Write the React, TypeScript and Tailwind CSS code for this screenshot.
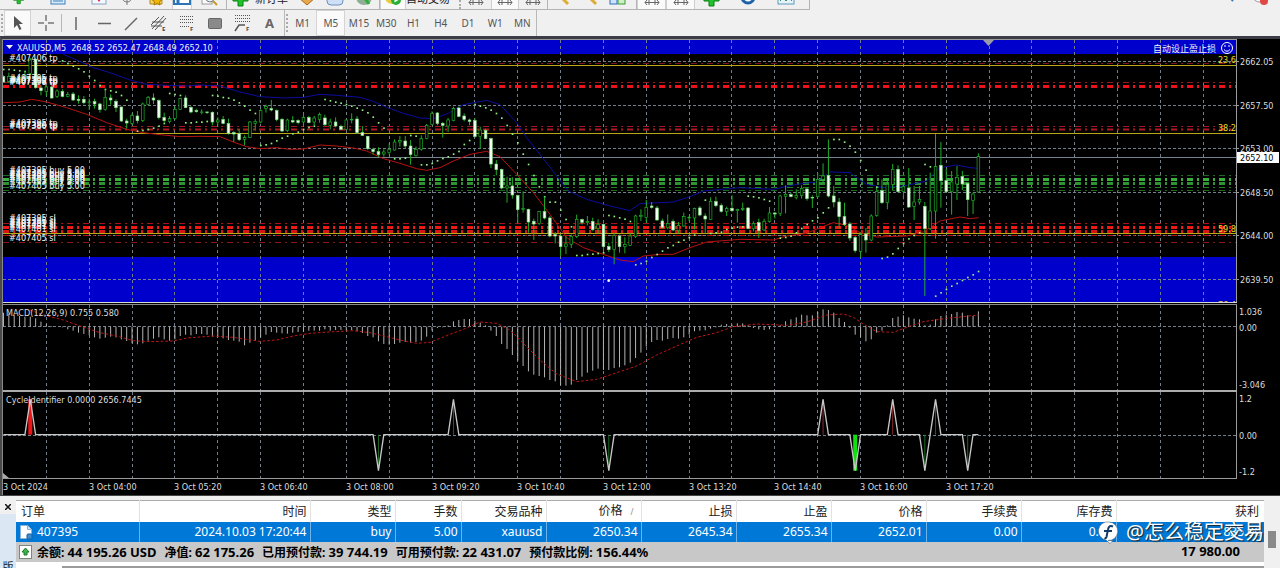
/**
 * MT4 行情终端 — 工具栏 + XAUUSD M5 图表 + 订单面板
 *
 * 图表坐标：1px = 3 tick，每根 K 线间隔 16.07 tick。
 */

import type { ReactNode } from 'react';

const UI_FONT = "font-['Noto_Sans','Noto_Sans_CJK_SC',sans-serif]";
const PANE_FONT = "text-[9px] font-['DejaVu_Sans_Condensed','Noto_Sans','Noto_Sans_CJK_SC',sans-serif]";

const GRID = '#737e8a';
const BAR_STEP = 16.07;
const barX = (i: number) => 10.5 + BAR_STEP * i;

// 最高、实体上沿、实体下沿、最低、是否阳线
type Candle = [number, number, number, number, 0 | 1];

const CANDLES: Candle[] = [
  [118, 122, 138, 140, 0], [110, 122, 136, 140, 1], [118, 124, 138, 142, 0], [112, 124, 136, 142, 1],
  [105, 118, 130, 138, 1], [66, 72, 112, 118, 1], [66, 70, 155, 158, 0], [148, 156, 164, 178, 0],
  [148, 153, 166, 180, 1], [150, 153, 186, 188, 0], [160, 165, 181, 186, 1], [160, 166, 181, 184, 0],
  [168, 176, 182, 184, 1], [168, 174, 192, 195, 0], [178, 190, 193, 203, 0], [180, 190, 200, 205, 0],
  [188, 198, 200, 222, 1], [188, 197, 204, 218, 0], [200, 204, 221, 230, 0], [160, 184, 221, 224, 1],
  [175, 186, 192, 206, 0], [190, 196, 215, 228, 0], [212, 213, 255, 258, 0], [248, 255, 261, 278, 0],
  [232, 239, 262, 268, 1], [225, 240, 254, 262, 0], [200, 204, 254, 258, 1], [180, 184, 206, 208, 1],
  [172, 186, 192, 204, 0], [190, 194, 245, 250, 0], [230, 245, 254, 260, 0], [240, 248, 257, 262, 1],
  [212, 220, 248, 252, 1], [186, 188, 220, 222, 1], [178, 186, 215, 216, 0], [210, 214, 228, 232, 0],
  [218, 224, 227, 230, 0], [220, 228, 230, 235, 1], [226, 228, 230, 234, 0], [226, 229, 258, 268, 0],
  [244, 252, 258, 272, 1], [240, 251, 262, 265, 0], [248, 263, 292, 296, 0], [286, 290, 294, 318, 0],
  [278, 293, 311, 315, 0], [298, 305, 310, 328, 1], [255, 258, 304, 306, 1], [250, 256, 262, 284, 1],
  [220, 224, 258, 262, 1], [206, 212, 218, 230, 1], [192, 218, 222, 226, 0], [220, 224, 251, 256, 0],
  [246, 250, 285, 288, 0], [248, 252, 284, 288, 1], [240, 254, 258, 262, 0], [250, 254, 260, 265, 0],
  [232, 245, 258, 270, 1], [240, 245, 260, 262, 0], [240, 246, 258, 268, 1], [230, 236, 250, 260, 1],
  [236, 246, 266, 270, 0], [248, 258, 268, 280, 1], [244, 258, 270, 274, 0], [266, 271, 280, 282, 0],
  [250, 252, 280, 282, 1], [232, 250, 252, 262, 1], [240, 249, 290, 294, 0], [270, 290, 298, 300, 0],
  [300, 301, 338, 342, 0], [335, 340, 347, 356, 0], [334, 347, 356, 362, 0], [340, 348, 354, 362, 1],
  [322, 340, 350, 356, 1], [310, 318, 342, 344, 1], [300, 314, 318, 332, 1], [300, 315, 330, 338, 0],
  [312, 330, 356, 386, 0], [332, 340, 358, 362, 1], [298, 308, 340, 344, 1], [264, 268, 308, 310, 1],
  [226, 232, 266, 268, 1], [228, 231, 262, 268, 0], [258, 262, 268, 305, 0], [246, 252, 270, 288, 1],
  [212, 218, 254, 256, 1], [212, 216, 241, 244, 0], [232, 240, 250, 256, 0], [248, 252, 256, 268, 0],
  [246, 254, 302, 305, 0], [272, 282, 302, 338, 1], [278, 283, 308, 310, 0], [305, 308, 384, 396, 0],
  [372, 384, 401, 418, 0], [398, 401, 456, 460, 0], [422, 450, 456, 500, 1], [424, 450, 477, 488, 0],
  [476, 479, 521, 562, 0], [466, 518, 521, 530, 1], [518, 520, 558, 590, 0], [548, 556, 564, 612, 0],
  [525, 527, 562, 566, 1], [482, 527, 546, 550, 0], [540, 546, 600, 604, 0], [588, 596, 600, 622, 0],
  [596, 600, 632, 660, 0], [600, 624, 632, 654, 1], [596, 601, 625, 636, 1], [536, 550, 602, 606, 1],
  [548, 551, 559, 566, 0], [540, 557, 560, 568, 1], [545, 556, 581, 586, 0], [550, 565, 578, 592, 1],
  [562, 565, 632, 644, 0], [620, 632, 641, 648, 0], [592, 598, 641, 685, 1], [596, 600, 632, 650, 0],
  [604, 626, 632, 652, 1], [592, 600, 628, 630, 1], [536, 540, 602, 606, 1], [520, 538, 542, 555, 1],
  [492, 514, 544, 560, 1], [498, 510, 514, 518, 0], [510, 516, 552, 554, 0], [548, 555, 574, 578, 0],
  [535, 563, 575, 580, 1], [550, 556, 582, 586, 0], [558, 568, 583, 592, 1], [530, 542, 570, 572, 1],
  [540, 544, 546, 555, 1], [515, 517, 546, 580, 1], [510, 516, 537, 541, 0], [532, 540, 549, 592, 0],
  [484, 496, 550, 552, 1], [482, 497, 509, 514, 0], [502, 508, 526, 530, 0], [512, 518, 526, 540, 1],
  [478, 517, 524, 528, 0], [518, 520, 524, 560, 1], [500, 517, 520, 525, 1], [514, 516, 578, 580, 0],
  [556, 562, 578, 586, 1], [548, 560, 584, 606, 0], [548, 556, 582, 585, 1], [513, 531, 556, 560, 1],
  [528, 531, 534, 548, 0], [476, 480, 532, 540, 1], [448, 475, 482, 532, 1], [470, 476, 482, 484, 0],
  [460, 478, 484, 490, 1], [448, 458, 478, 488, 1], [455, 459, 488, 494, 0], [478, 484, 486, 516, 0],
  [410, 430, 482, 486, 1], [382, 420, 430, 442, 1], [310, 418, 480, 484, 0], [450, 480, 498, 514, 0],
  [486, 498, 542, 578, 0], [500, 542, 566, 570, 0], [558, 564, 606, 614, 0], [600, 605, 644, 650, 0],
  [590, 596, 646, 666, 1], [576, 594, 612, 650, 0], [535, 540, 612, 616, 1], [455, 466, 538, 542, 1],
  [430, 464, 500, 504, 0], [432, 445, 500, 520, 1], [384, 400, 445, 464, 1], [388, 400, 467, 470, 0],
  [440, 452, 467, 490, 1], [396, 456, 513, 516, 0], [450, 498, 511, 552, 1], [450, 490, 498, 506, 1],
  [498, 511, 578, 780, 0], [410, 525, 578, 582, 1], [294, 392, 525, 608, 1], [318, 388, 434, 515, 0],
  [398, 434, 467, 470, 0], [405, 438, 467, 536, 1], [390, 424, 444, 492, 1], [405, 422, 444, 462, 0],
  [440, 443, 491, 540, 0], [470, 474, 494, 534, 1], [352, 362, 468, 470, 1],
];

// 抛物线转向 (SAR)：起始 K 线 + 逐根数值
const SAR: { from: number; ys: number[] }[] = [
  { from: 0, ys: [100, 100, 102, 104, 106] },
  { from: 11, ys: [74, 82, 90, 98, 107, 120, 133, 148, 160, 164, 168, 178, 192] },
  { from: 25, ys: [285, 283, 280, 276, 270, 262] },
  { from: 31, ys: [172, 175, 178] },
  { from: 34, ys: [260, 260, 258, 258, 256] },
  { from: 39, ys: [178, 180, 184, 186, 192, 200, 210, 222, 232] },
  { from: 48, ys: [328, 326, 322, 314, 306, 300, 293, 288, 280, 274, 270] },
  { from: 60, ys: [190, 194, 198, 201, 205, 210, 216, 222, 230, 243, 260, 276] },
  { from: 73, ys: [368, 368, 366, 298, 300, 386, 386, 382, 374, 367, 362, 354, 346, 325, 313] },
  { from: 88, ys: [205, 210, 215, 222, 232, 246, 268, 294, 320, 354, 385, 418, 452, 482, 498, 498, 522, 550, 572] },
  { from: 107, ys: [658, 658, 655, 654, 652, 650] },
  { from: 113, ys: [538, 541, 545, 549, 556] },
  { from: 118, ys: [686, 682, 675, 664, 655, 645, 635, 628, 618, 612, 604, 597] },
  { from: 131, ys: [492, 592, 590, 588, 580, 576, 573, 572] },
  { from: 139, ys: [480, 482, 485, 490, 495] },
  { from: 145, ys: [606, 604, 600, 590, 577, 565, 554, 545, 530, 515] },
  { from: 155, ys: [310, 310, 318, 330, 348, 373, 402, 430, 453] },
  { from: 164, ys: [667, 663, 653, 637, 622, 608, 598, 590] },
  { from: 172, ys: [385, 392] },
  { from: 174, ys: [780, 770, 760, 750, 742, 733, 724, 716, 706] },
];

const UPPER_BAND =
  '190,55 230,72 280,95 330,110 390,132 440,145 500,148 560,150 600,147 660,150 720,168 780,182 850,186 910,184 960,175 1010,178 1080,184 1120,196 1160,214 1210,232 1260,246 1300,248 1345,232 1390,206 1460,193 1500,206 1550,260 1580,305 1620,355 1670,420 1705,465 1760,490 1830,510 1890,524 1920,503 2020,498 2070,482 2110,465 2220,455 2320,460 2390,445 2450,438 2490,408 2550,410 2570,425 2600,445 2650,455 2710,450 2780,435 2820,395 2870,387 2910,395 2936,397';

const LOWER_BAND =
  '10,200 60,198 95,190 140,198 200,215 260,235 320,260 380,280 430,290 480,296 540,302 600,301 660,302 700,318 740,332 780,338 830,335 870,340 910,339 960,327 1010,330 1060,336 1100,345 1150,368 1200,382 1250,398 1280,403 1320,395 1360,375 1410,355 1460,346 1500,362 1550,415 1600,470 1650,535 1700,605 1750,635 1810,655 1860,672 1900,677 1930,660 1980,655 2020,655 2070,635 2120,618 2220,610 2320,612 2360,600 2420,592 2460,575 2500,560 2540,568 2580,590 2630,603 2720,600 2770,588 2820,555 2880,543 2910,548 2936,545';

const MACD_BARS = [
  38, 42, 46, 48, 50, 50, 55, 65, 72, 78, 80, 82, 88, 92, 98, 102, 106, 112, 116, 113, 110, 112, 118, 123, 130,
  133, 130, 122, 116, 112, 118, 122, 118, 108, 104, 106, 102, 102, 104, 110, 112, 115, 120, 122, 125, 136, 128,
  122, 112, 104, 96, 98, 100, 101, 98, 96, 95, 92, 92, 92, 88, 92, 90, 90, 92, 90, 94, 99, 108, 112, 124, 132,
  134, 132, 128, 126, 128, 126, 122, 110, 92, 84, 82, 76, 64, 60, 57, 57, 62, 68, 76, 92, 108, 132, 147, 165,
  182, 198, 214, 224, 228, 232, 240, 244, 256, 257, 254, 240, 230, 218, 212, 206, 210, 210, 204, 202, 196, 188,
  174, 158, 140, 126, 120, 122, 117, 114, 116, 112, 104, 94, 92, 91, 86, 82, 74, 72, 74, 70, 70, 76, 84, 88, 90,
  88, 82, 76, 64, 58, 52, 44, 46, 46, 36, 28, 30, 38, 54, 66, 84, 104, 112, 124, 118, 98, 92, 76, 54, 50, 46,
  52, 56, 58, 76, 74, 58, 48, 44, 42, 36, 38, 46, 48, 34,
];

const MACD_SIGNAL =
  '90,30 130,45 190,60 240,78 300,98 350,108 400,122 450,125 520,123 560,114 640,108 700,112 780,124 830,120 880,108 930,100 1000,95 1060,92 1110,98 1160,110 1200,120 1250,130 1290,127 1350,103 1390,88 1440,66 1490,70 1530,90 1570,130 1620,180 1670,222 1730,245 1790,238 1850,218 1910,198 1970,165 2030,138 2090,112 2150,98 2200,80 2270,72 2360,76 2420,66 2480,45 2530,42 2560,52 2590,72 2630,95 2680,97 2720,82 2770,65 2840,55 2936,45';

// 周期信号：1 = 顶部，-1 = 底部
const CYCLES: { bar: number; dir: 1 | -1; strong?: boolean }[] = [
  { bar: 5, dir: 1, strong: true },
  { bar: 70, dir: -1 },
  { bar: 84, dir: 1 },
  { bar: 113, dir: -1 },
  { bar: 153, dir: 1 },
  { bar: 159, dir: -1, strong: true },
  { bar: 166, dir: 1 },
  { bar: 172, dir: -1 },
  { bar: 174, dir: 1 },
  { bar: 180, dir: -1 },
];

const PRICES = ['2662.05', '2657.50', '2653.00', '2648.50', '2644.00', '2639.50'];
const PRICE_Y = [22, 66, 109, 153, 196, 240];

const TIMES = [
  '3 Oct 2024', '3 Oct 04:00', '3 Oct 05:20', '3 Oct 06:40', '3 Oct 08:00', '3 Oct 09:20',
  '3 Oct 10:40', '3 Oct 12:00', '3 Oct 13:20', '3 Oct 14:40', '3 Oct 16:00', '3 Oct 17:20',
];

const ORDER_LINES = [
  { y: 23, w: 1, c: '#7a1418' },
  { y: 42, w: 1, c: '#a01820' },
  { y: 46, w: 3, c: '#f0101c' },
  { y: 86, w: 1, c: '#a01820' },
  { y: 89, w: 2, c: '#b01822' },
  { y: 135, w: 1, c: '#1c6a20' },
  { y: 139, w: 3, c: '#3aae3e' },
  { y: 143, w: 3, c: '#2c9430' },
  { y: 147, w: 1, c: '#1f8024' },
  { y: 150, w: 1, c: '#176a1c' },
  { y: 183, w: 1, c: '#a81418' },
  { y: 187, w: 3, c: '#f01818' },
  { y: 191, w: 3, c: '#d81414' },
  { y: 195, w: 1, c: '#b01414' },
  { y: 202, w: 1, c: '#8a1414' },
];

const ORDER_LABELS: { text: string; ys: number[] }[] = [
  { text: '#407406 tp', ys: [21] },
  { text: '#407395 tp', ys: [41, 43] },
  { text: '#407398 tp', ys: [44, 45] },
  { text: '#407395 tp', ys: [86] },
  { text: '#407386 tp', ys: [88, 89] },
  { text: '#407395 buy 5.00', ys: [133, 136, 138] },
  { text: '#407401 buy 5.00', ys: [137, 140, 142] },
  { text: '#407405 buy 5.00', ys: [144, 149] },
  { text: '#407395 sl', ys: [181, 184, 186] },
  { text: '#407401 sl', ys: [187, 189, 192] },
  { text: '#407405 sl', ys: [201] },
];

const TIMEFRAMES = ['M1', 'M5', 'M15', 'M30', 'H1', 'H4', 'D1', 'W1', 'MN'];

const COLUMNS = [
  { title: '订单', value: '407395', width: 'w-[123px]' },
  { title: '时间', value: '2024.10.03 17:20:44', width: 'w-[171px]' },
  { title: '类型', value: 'buy', width: 'w-[85px]' },
  { title: '手数', value: '5.00', width: 'w-[66px]' },
  { title: '交易品种', value: 'xauusd', width: 'w-[85px]' },
  { title: '价格', value: '2650.34', width: 'w-[95px]' },
  { title: '止损', value: '2645.34', width: 'w-[95px]' },
  { title: '止盈', value: '2655.34', width: 'w-[95px]' },
  { title: '价格', value: '2652.01', width: 'w-[95px]' },
  { title: '手续费', value: '0.00', width: 'w-[95px]' },
  { title: '库存费', value: '0.00', width: 'w-[95px]' },
  { title: '获利', value: '835.00', width: 'w-auto' },
];

const SUMMARY = [
  { label: '余额:', value: '44 195.26 USD' },
  { label: '净值:', value: '62 175.26' },
  { label: '已用预付款:', value: '39 744.19' },
  { label: '可用预付款:', value: '22 431.07' },
  { label: '预付款比例:', value: '156.44%' },
];

/* ---------- 工具栏 ---------- */

function Plus() {
  return <path d="M6 1h5v5h5v5h-5v5H6v-5H1V6h5z" fill="#1fc42a" stroke="#0b7d14" />;
}

function Ruler() {
  return <path d="M2 12.5h14M4 10l-2 2.5L4 15M14 10l2 2.5-2 2.5M6 6v9M12 6v9" stroke="#666" fill="none" />;
}

function Slot({ width, label, pressed, children }: { width: string; label: string; pressed?: boolean; children: ReactNode }) {
  return (
    <button
      aria-label={label}
      className={`${width} h-5 shrink-0 flex items-center justify-center ${pressed ? 'bg-[#fafafa] border-x border-[#cfcfcf]' : ''}`}
    >
      {children}
    </button>
  );
}

function Pic({ children }: { children: ReactNode }) {
  return <svg className="w-[18px] h-[18px] shrink-0" viewBox="0 0 18 18">{children}</svg>;
}

function TopToolbar() {
  return (
    <div className="h-[10px] overflow-hidden flex items-end">
      <div className="h-5 pl-[5px] flex items-end border-b border-r border-[#b4b4b4] w-[810px] shrink-0">
        <Slot width="w-[28px]" label="新图表"><svg className="w-[12px] h-[12px]" viewBox="0 0 18 18"><Plus /></svg></Slot>
        <Slot width="w-[50px]" label="模板"><Pic><rect x="2" y="1" width="14" height="13" fill="#d8ecfb" stroke="#3b7fb8" /><path d="M4 11h10" stroke="#3b7fb8" /></Pic></Slot>
        <Slot width="w-[32px]" label="市场报价"><Pic><rect x="2" y="1" width="14" height="13" fill="#f4f8ff" stroke="#8aa4c4" /><path d="M7 9l2 3 2-3z" fill="#d24" /></Pic></Slot>
        <Slot width="w-[24px]" label="数据窗口"><Pic><circle cx="9" cy="7" r="5" fill="none" stroke="#777" /><path d="M9 2v13M3 7h12" stroke="#777" /></Pic></Slot>
        <Slot width="w-[33px]" label="导航"><Pic><path d="M3 2h12v12H3z" fill="#f3d36a" stroke="#b58a20" /><path d="M10 7l1.500 2.500 3 .5-2 2 .5 3-3-1.500-3 1.500.5-3-2-2 3-.5z" fill="#f0b800" stroke="#a87b00" /></Pic></Slot>
        <Slot width="w-[20px]" label="终端" pressed><Pic><rect x="1" y="1" width="16" height="13" fill="#fff" stroke="#2b74b8" strokeWidth="2" /><path d="M5 2v12" stroke="#2b74b8" strokeWidth="3" /></Pic></Slot>
        <Slot width="w-[34px]" label="策略测试"><Pic><rect x="2" y="2" width="10" height="12" fill="#fff" stroke="#999" /><circle cx="10" cy="8" r="4" fill="#e6f2fb" stroke="#777" /><path d="M13 11l4 4" stroke="#c79a28" strokeWidth="2" /></Pic></Slot>
        <span className="h-5 w-px bg-[#b4b4b4]" />
        <Slot width="w-[28px]" label="下单"><Pic><Plus /></Pic></Slot>
        <span className="w-[42px] text-[11px] leading-5 text-[#222] whitespace-nowrap">新订单</span>
        <Slot width="w-[20px]" label="MetaEditor"><Pic><path d="M0 7l9-6 9 6-9 8z" fill="#e9a84a" stroke="#a8641a" /></Pic></Slot>
        <Slot width="w-[36px]" label="社区"><Pic><rect x="1" y="2" width="16" height="13" rx="4" fill="#cfdff6" stroke="#6d8fc2" /></Pic></Slot>
        <Slot width="w-[22px]" label="信号"><Pic><circle cx="9" cy="7" r="8" fill="#8fae94" /><path d="M9 7l5 7" stroke="#2fae3c" strokeWidth="3" /></Pic></Slot>
        <span className="ml-[4px] h-5 w-px bg-[#b4b4b4]" />
        <Slot width="w-[26px]" label="自动交易开关" pressed><Pic><circle cx="8" cy="7" r="7" fill="#e9cc3a" /><circle cx="12" cy="10" r="5" fill="#28b034" /><path d="M10.500 7.500l4 2.500-4 2.500z" fill="#fff" /></Pic></Slot>
        <span className="w-[53px] text-[11px] leading-5 text-[#222] whitespace-nowrap">自动交易</span>
        <span className="h-5 border-l-2 border-dotted border-[#aaa]" />
        <Slot width="w-[30px]" label="柱状图"><Pic><Ruler /></Pic></Slot>
        <Slot width="w-[28px]" label="蜡烛图" pressed><Pic><Ruler /></Pic></Slot>
        <Slot width="w-[28px]" label="折线图"><Pic><Ruler /></Pic></Slot>
        <span className="h-5 w-px bg-[#b4b4b4]" />
        <Slot width="w-[30px]" label="放大"><Pic><path d="M7 7l7 7" stroke="#dcae35" strokeWidth="3" /></Pic></Slot>
        <Slot width="w-[26px]" label="缩小"><Pic><path d="M7 7l7 7" stroke="#dcae35" strokeWidth="3" /></Pic></Slot>
        <Slot width="w-[28px]" label="平铺"><Pic><rect x="1" y="1" width="7" height="13" fill="#cfe3fb" stroke="#2f6fc0" /><rect x="9" y="1" width="7" height="13" fill="#cdf0c6" stroke="#3f9a35" /></Pic></Slot>
        <span className="ml-1 h-5 w-px bg-[#b4b4b4]" />
        <Slot width="w-[29px]" label="自动滚动" pressed><Pic><Ruler /></Pic></Slot>
        <Slot width="w-[29px]" label="图表平移" pressed><Pic><Ruler /></Pic></Slot>
        <Slot width="w-[34px]" label="指标"><Pic><Plus /></Pic></Slot>
        <Slot width="w-[38px]" label="周期"><Pic><circle cx="9" cy="7" r="6" fill="#fff" stroke="#1f62a8" strokeWidth="3" /></Pic></Slot>
        <Slot width="w-[38px]" label="图表模板"><Pic><rect x="1" y="1" width="16" height="13" fill="#e6f4fa" stroke="#5a9ab8" /><path d="M3 11l3-3 3 3 3-3 3 3" stroke="#3e8a72" fill="none" /></Pic></Slot>
      </div>
      <div className="ml-auto h-5 pb-px pr-1 flex items-end">
        <Slot width="w-[30px]" label="搜索"><Pic><path d="M4 3l7 8" stroke="#3a78b8" strokeWidth="2" /></Pic></Slot>
        <Slot width="w-[30px]" label="消息"><Pic><ellipse cx="8" cy="7" rx="7" ry="5" fill="#fff" stroke="#999" /><circle cx="12" cy="11" r="4" fill="#e04848" /></Pic></Slot>
      </div>
    </div>
  );
}

const TOOLS: { label: string; icon: ReactNode }[] = [
  { label: '垂直线', icon: <path d="M9 3v13" stroke="#666" strokeWidth="1.500" /> },
  { label: '水平线', icon: <path d="M3 9.500h13" stroke="#666" strokeWidth="1.500" /> },
  { label: '趋势线', icon: <path d="M3 16L15 4" stroke="#666" strokeWidth="1.500" /> },
  {
    label: '等距通道',
    icon: (
      <>
        <path d="M2 15L14 2M1 11L9 3M5 16L16 4M2 8h12M1 12h11" stroke="#555" />
        <text x="12" y="17" fontSize="6" fontWeight="700" fill="#444">E</text>
      </>
    ),
  },
  {
    label: '斐波那契回调线',
    icon: (
      <>
        <path d="M2 2.500h14M2 5.500h14M2 8.500h14M2 12.500h9" stroke="#555" strokeDasharray="1 1" />
        <text x="12" y="17" fontSize="6" fontWeight="700" fill="#444">F</text>
      </>
    ),
  },
  { label: '矩形', icon: <rect x="2.500" y="4.500" width="13" height="10" rx="1" fill="#8a8a8a" stroke="#666" /> },
  {
    label: '斐波那契扩展',
    icon: (
      <>
        <path d="M2 1.500h15M2 4.500h15M2 7.500h15" stroke="#555" strokeDasharray="1 1" />
        <path d="M2 17l4-6 6 0" stroke="#555" strokeWidth="1.500" fill="none" />
        <text x="13" y="17" fontSize="6" fontWeight="700" fill="#444">F</text>
      </>
    ),
  },
  { label: '文字', icon: <text x="4" y="14" fontSize="13" fontWeight="700" fill="#666">A</text> },
];

function DrawToolbar() {
  return (
    <div className="h-[26px] flex items-stretch text-[10px] text-[#555]">
      <span className="w-[3px] my-1 ml-px border-l-2 border-dotted border-[#aaa]" />
      <button aria-label="光标" className="w-[27px] flex items-center justify-center bg-[#fafafa] border border-[#d4d4d4]">
        <Pic><path d="M5 2v12l3-3 2.500 5 2-1-2.500-5h4z" fill="#555" /></Pic>
      </button>
      <button aria-label="十字准线" className="w-[29px] flex items-center justify-center">
        <Pic><path d="M9 1v6M9 11v6M1 9h6M11 9h6" stroke="#777" strokeWidth="1.500" /></Pic>
      </button>
      <span className="w-px my-1 ml-px bg-[#b8b8b8]" />
      <div className="w-[222px] flex">
        {TOOLS.map((t) => (
          <button key={t.label} aria-label={t.label} className="flex-1 flex items-center justify-center">
            <Pic>{t.icon}</Pic>
          </button>
        ))}
      </div>
      <span className="w-px bg-[#b8b8b8]" />
      <span className="w-[3px] my-1 ml-px border-l-2 border-dotted border-[#aaa]" />
      <div className="w-[248px] flex border-r border-[#b8b8b8]">
        {TIMEFRAMES.map((tf) => (
          <button
            key={tf}
            className={`flex-1 text-center ${tf === 'M5' ? 'bg-[#fafafa] border border-[#d4d4d4]' : ''}`}
          >
            {tf}
          </button>
        ))}
      </div>
    </div>
  );
}

/* ---------- 图表 ---------- */

function VerticalGrid() {
  return (
    <g stroke={GRID} strokeDasharray="3 3">
      {Array.from({ length: 60 }, (_, k) => {
        const x = Math.round(42.85 * (k + 1)) + 0.5;
        return <line key={k} x1={x} x2={x} y1="0" y2="100%" />;
      })}
    </g>
  );
}

function PricePane() {
  return (
    <svg className={`flex-1 min-w-0 h-[262px] bg-black ${PANE_FONT}`} fill="#f4f4f4">
      <rect width="100%" height="14" fill="#0000cd" />
      <rect y="217" width="100%" height="45" fill="#0000cd" />
      <VerticalGrid />
      <g stroke={GRID} strokeDasharray="3 2">
        {PRICE_Y.map((y) => (
          <line key={y} x1="0" x2="100%" y1={y - 0.5} y2={y - 0.5} />
        ))}
      </g>

      {/* 挂单线 */}
      {ORDER_LINES.map((l) => (
        <line key={l.y} x1="0" x2="100%" y1={l.y + 0.5} y2={l.y + 0.5} stroke={l.c} strokeWidth={l.w} strokeDasharray="6 4 2 4" />
      ))}

      <line x1="0" x2="100%" y1="117.5" y2="117.5" stroke="#76828e" />

      {/* 斐波那契水平 */}
      {[25, 93, 193].map((y) => (
        <line key={y} x1="0" x2="100%" y1={y + 0.5} y2={y + 0.5} stroke="#b8a818" />
      ))}

      <g transform="translate(-3 -4) scale(0.33333)">
        <polyline points={UPPER_BAND} fill="none" stroke="#0c0ca0" strokeWidth="3" />
        <polyline points={LOWER_BAND} fill="none" stroke="#b81212" strokeWidth="3" />
        {SAR.map((s) =>
          s.ys.map((y, n) => (
            <rect key={`${s.from}-${n}`} x={barX(s.from + n) - 2} y={y - 2} width="5" height="5" fill="#90f080" />
          )),
        )}
        {CANDLES.map(([high, top, bottom, low, up], i) => (
          <g key={i}>
            <line x1={barX(i)} x2={barX(i)} y1={high} y2={low} stroke="#1fae28" strokeWidth="3" />
            <rect
              x={barX(i) - 4}
              y={top}
              width="8"
              height={Math.max(bottom - top, 2)}
              fill={up ? '#000' : '#f0fff0'}
              stroke={up ? '#1fb428' : '#7fdc80'}
              strokeWidth="2"
            />
          </g>
        ))}
        <circle cx="1826" cy="734" r="4" fill="#fff" />
      </g>

      <g fill="#f0d820" textAnchor="end">
        <text x="100%" y="23">23.6</text>
        <text x="100%" y="91">38.2</text>
        <text x="100%" y="192">59.8</text>
        <text x="100%" y="268">76.4</text>
      </g>

      {ORDER_LABELS.map((o) => o.ys.map((y) => <text key={y} x="6" y={y}>{o.text}</text>))}

      <path d="M3 5h7l-3.500 4z" />
      <text x="14" y="11" className="whitespace-pre">XAUUSD,M5  2648.52 2652.47 2648.49 2652.10</text>
      <path d="M980 0h11l-5.500 6z" fill="#9a9aa8" />
      <svg x="100%" overflow="visible">
        <text x="-20" y="12" textAnchor="end">自动设止盈止损</text>
        <g fill="none" stroke="#fff">
          <circle cx="-9" cy="8" r="5.500" />
          <path d="M-12 9.500q3 3.500 6 0M-11 5v2M-7 5v2" />
        </g>
      </svg>
    </svg>
  );
}

function PriceAxis() {
  return (
    <svg className={`w-[43px] shrink-0 h-[262px] ${PANE_FONT}`} fill="#ddd">
      {PRICES.map((p, i) => (
        <g key={p}>
          <line x1="0" x2="2" y1={PRICE_Y[i] - 0.5} y2={PRICE_Y[i] - 0.5} stroke="#999" />
          <text x="3" y={PRICE_Y[i] + 3}>{p}</text>
        </g>
      ))}
      <rect y="112" width="42" height="11" fill="#fff" />
      <text x="3" y="121" fill="#000">2652.10</text>
    </svg>
  );
}

function MacdPane() {
  return (
    <svg className={`flex-1 min-w-0 h-[85px] ${PANE_FONT}`} fill="#ddd">
      <VerticalGrid />
      <line x1="0" x2="100%" y1="21.5" y2="21.5" stroke={GRID} strokeDasharray="3 2" />
      <g transform="translate(-3 -5) scale(0.33333)">
        {MACD_BARS.map((y, i) => (
          <line key={i} x1={barX(i)} x2={barX(i)} y1="80" y2={y} stroke="#b4b4b4" strokeWidth="3" />
        ))}
        <polyline points={MACD_SIGNAL} fill="none" stroke="#c01616" strokeWidth="3" strokeDasharray="8 6" />
      </g>
      <text x="3" y="11">MACD(12,26,9) 0.755 0.580</text>
    </svg>
  );
}

function CyclePane() {
  const zero = 404;
  const peak = (dir: 1 | -1) => (dir === 1 ? 298 : 512);
  const points = [
    `10,${zero}`,
    ...CYCLES.map((c) => `${barX(c.bar - 1)},${zero} ${barX(c.bar)},${peak(c.dir)} ${barX(c.bar + 1)},${zero}`),
    `${barX(182)},${zero}`,
  ].join(' ');

  return (
    <svg className={`flex-1 min-w-0 h-[86px] ${PANE_FONT}`} fill="#ddd">
      <VerticalGrid />
      <line x1="0" x2="100%" y1="43.5" y2="43.5" stroke={GRID} strokeDasharray="3 2" />
      <g transform="translate(-3 -92) scale(0.33333)">
        {CYCLES.map((c) => (
          <line
            key={c.bar}
            x1={barX(c.bar)}
            x2={barX(c.bar)}
            y1={zero}
            y2={peak(c.dir)}
            stroke={c.strong ? (c.dir === 1 ? '#f01414' : '#10e010') : c.dir === 1 ? '#8a2a2a' : '#1c6a24'}
            strokeWidth={c.strong ? 12 : 3}
          />
        ))}
        <polyline points={points} fill="none" stroke="#c8c8c8" strokeWidth="4" />
      </g>
      <path d="M0 81v5h6z" fill="#aaa" />
      <text x="3" y="11">CycleIdentifier 0.0000 2656.7445</text>
    </svg>
  );
}

function AxisText({ height, items }: { height: string; items: [string, number][] }) {
  return (
    <svg className={`w-[43px] shrink-0 ${height} ${PANE_FONT}`} fill="#ddd">
      {items.map(([text, y]) => (
        <text key={text} x="2" y={y}>{text}</text>
      ))}
    </svg>
  );
}

function Chart() {
  return (
    <section className="bg-black border-t-[3px] border-t-[#3c3c46] border-l-2 border-l-[#4a4a4a] border-b border-b-[#444]">
      <div className="border-l border-[#8a8a8a]">
        <div className="mr-[43px] h-px bg-[#9a9a9a]" />
        <div className="flex">
          <PricePane />
          <span className="w-px bg-[#9a9a9a]" />
          <PriceAxis />
        </div>
        <div className="mr-[43px] h-[3px] border-t border-t-[#d8d8d8] border-b border-b-[#8a8a8a]" />
        <div className="flex">
          <MacdPane />
          <span className="w-px bg-[#9a9a9a]" />
          <AxisText height="h-[85px]" items={[['1.036', 10], ['0.00', 26], ['-3.046', 83]]} />
        </div>
        <div className="mr-[43px] h-[2px] bg-[#acacac]" />
        <div className="flex">
          <CyclePane />
          <span className="w-px bg-[#9a9a9a]" />
          <AxisText height="h-[86px]" items={[['1.2', 10], ['0.00', 47], ['-1.2', 83]]} />
        </div>
        <div className="mr-[43px] h-px bg-[#9a9a9a]" />
        <svg className={`block w-full h-[16px] ${PANE_FONT}`} fill="#ddd">
          {TIMES.map((t, i) => (
            <text key={t} x={Math.round(85.7 * i)} y="11">{t}</text>
          ))}
        </svg>
      </div>
    </section>
  );
}

/* ---------- 终端面板 ---------- */

function Watermark() {
  return (
    <div className="absolute right-0 top-[20px] flex items-center gap-[6px] text-white">
      <svg className="w-[22px] h-[24px]" viewBox="0 0 22 24">
        <path d="M11 2a9 9 0 1 1-1 18.500h5l-3 3-4-3.500A9 9 0 0 1 11 2z" fill="#fff" stroke="#33506e" strokeWidth="0.500" />
        <path d="M15 6.500c-3-1.500-4.500 0-5 3L8.500 17c-.3 1-1 1.300-2 1M6 11h8" stroke="#123a66" strokeWidth="2" fill="none" />
      </svg>
      <span className="text-[20px] leading-6 whitespace-nowrap [text-shadow:1px_1px_1px_#222]">@怎么稳定交易</span>
    </div>
  );
}

function Terminal() {
  return (
    <section className="flex-1 mt-[4px] flex text-[12px] text-[#222]">
      <aside className="w-4 shrink-0 flex flex-col items-center overflow-hidden">
        <button aria-label="关闭" className="h-[14px] w-full flex items-center justify-center">
          <svg className="w-[6px] h-[6px]" viewBox="0 0 6 6"><path d="M0 0l6 6M6 0L0 6" stroke="#111" strokeWidth="1.500" /></svg>
        </button>
        <div className="flex-1 w-full bg-[#dbe7f3] text-center h-0 flex flex-col justify-end">
          <span className="h-[7px] text-[11px] leading-[11px]">版</span>
        </div>
      </aside>

      <div className="relative flex-1 min-w-0">
        <table className="w-full table-fixed border-collapse bg-white border-t border-[#aaa]">
          <thead>
            <tr className="h-[20px]">
              {COLUMNS.map((c, i) => (
                <th
                  key={i}
                  scope="col"
                  className={`${c.width} p-0 font-normal leading-5 border-r border-[#e2e2e2] last:border-r-0 ${i === 0 ? 'text-left pl-[5px]' : 'text-right pr-[3px]'} last:pr-[5px]`}
                >
                  {c.title}
                  {i === 5 && <span className="ml-2 mr-1 text-[8px] text-[#888]" aria-hidden="true">/</span>}
                </th>
              ))}
            </tr>
          </thead>
          <tbody>
            <tr className="h-[20px] bg-[#0078d7] text-white">
              {COLUMNS.map((c, i) => (
                <td
                  key={i}
                  className={`p-0 leading-5 border-r border-[#6fb2ea] last:border-r-0 ${i === 0 ? 'pl-[3px]' : 'text-right pr-[3px]'}`}
                >
                  {i === 0 ? (
                    <span className="flex items-center gap-1">
                      <svg className="w-[14px] h-[16px]" viewBox="0 0 14 16">
                        <path d="M1.500 1.500h7l4 4v9h-11z" fill="#fff" stroke="#8ab4d8" />
                        <path d="M8.500 1.500v4h4" fill="#cfe2f2" stroke="#8ab4d8" />
                        <rect x="8" y="10" width="5" height="5" rx="1" fill="#3a8ed0" stroke="#1b5f9a" />
                      </svg>
                      {c.value}
                    </span>
                  ) : (
                    c.value
                  )}
                </td>
              ))}
            </tr>
          </tbody>
        </table>

        <div className="h-[20px] bg-[#c8c8c8] flex items-center pl-[3px] pr-6 font-bold text-black whitespace-nowrap">
          <svg className="w-[13px] h-[14px] mr-[5px]" viewBox="0 0 13 14">
            <rect x="0.500" y="0.500" width="12" height="13" fill="#fff" stroke="#7a8a7a" />
            <path d="M6.500 3l3.500 4H8v3H5V7H3z" fill="#3fb44a" stroke="#1c7a28" />
          </svg>
          <div className="flex gap-2 leading-5">
            {SUMMARY.map((s) => (
              <span key={s.label}>
                {s.label} <span className="text-[13px]">{s.value}</span>
              </span>
            ))}
          </div>
          <span className="ml-auto text-[13px]">17 980.00</span>
        </div>

        <div className="h-[6px] bg-white flex items-end">
          <div className="ml-[46px] flex-1 h-[2px] bg-[#9a9a9a]" />
        </div>
        <Watermark />
      </div>

      <div className="w-4 shrink-0 bg-[#f0f0f0]">
        <div className="mx-auto mt-[31px] w-2 h-[17px] bg-[#8a8a8a]" />
      </div>
    </section>
  );
}

export default function App() {
  return (
    <div className={`min-h-screen flex flex-col bg-[#f0f0f0] overflow-hidden ${UI_FONT}`}>
      <TopToolbar />
      <DrawToolbar />
      <Chart />
      <Terminal />
    </div>
  );
}
